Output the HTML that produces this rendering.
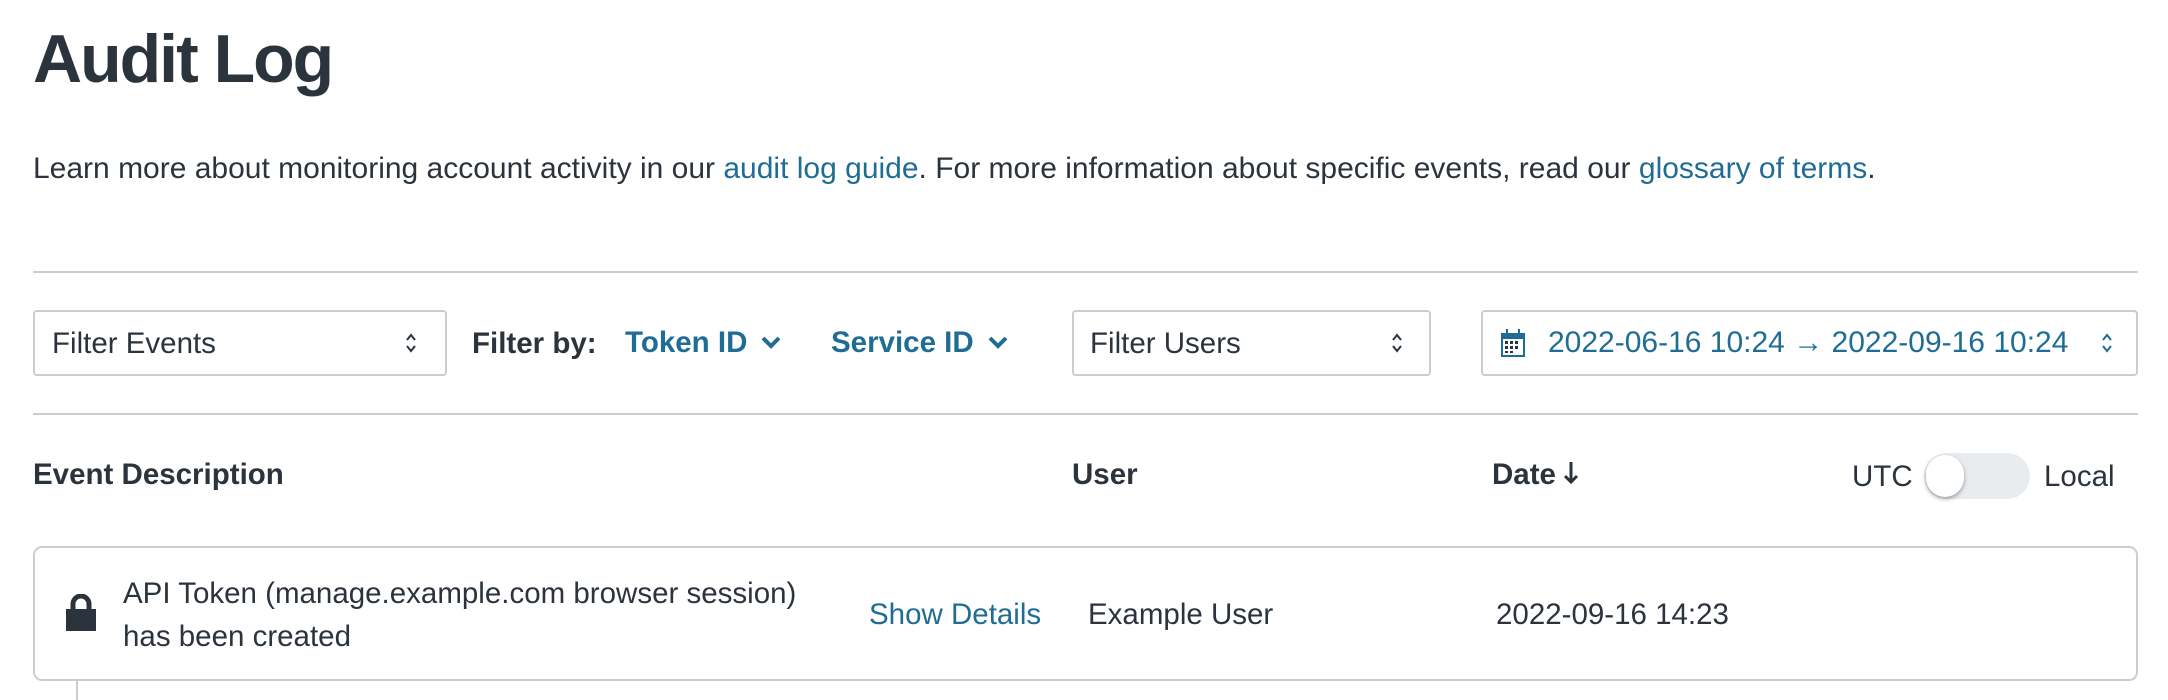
<!DOCTYPE html>
<html><head><meta charset="utf-8"><style>
*{margin:0;padding:0;box-sizing:border-box}
body{width:2168px;height:700px;overflow:hidden;background:#fff;font-family:"Liberation Sans",sans-serif;color:#2b333d;position:relative}
.a{position:absolute;white-space:nowrap}
a{color:#1f6d94;text-decoration:none}
.link{color:#1f6d94}
.hr{position:absolute;left:33px;width:2105px;height:2px;background:#c9cdd4}
.box{position:absolute;border:2px solid #c9cdd4;border-radius:4px;height:66px;top:310px}
.b{font-weight:bold}
.t{font-size:29.5px}
.spin{position:absolute;width:12px;height:22px}
</style></head><body>
<div class="a b" style="left:33px;top:20px;font-size:68px;letter-spacing:-2px;color:#2b333d">Audit Log</div>
<div class="a" style="left:33px;top:152px;font-size:30px">Learn more about monitoring account activity in our <a>audit log guide</a>. For more information about specific events, read our <a>glossary of terms</a>.</div>
<div class="hr" style="top:271px"></div>

<div class="box" style="left:33px;width:414px"></div>
<div class="a t" style="left:52px;top:327px">Filter Events</div>
<svg class="spin" style="left:405px;top:332px" viewBox="0 0 12 22"><path d="M2 8 6 3 10 8M2 14 6 19 10 14" fill="none" stroke="#2b333d" stroke-width="2"/></svg>

<div class="a b t" style="left:472px;top:327px">Filter by:</div>
<div class="a b link t" style="left:625px;top:326px">Token ID</div>
<svg class="a" style="left:760px;top:334px" width="22" height="16" viewBox="0 0 22 16"><path d="M3 4 11 12 19 4" fill="none" stroke="#1f6d94" stroke-width="4"/></svg>
<div class="a b link t" style="left:831px;top:326px">Service ID</div>
<svg class="a" style="left:987px;top:334px" width="22" height="16" viewBox="0 0 22 16"><path d="M3 4 11 12 19 4" fill="none" stroke="#1f6d94" stroke-width="4"/></svg>

<div class="box" style="left:1072px;width:359px"></div>
<div class="a t" style="left:1090px;top:327px">Filter Users</div>
<svg class="spin" style="left:1391px;top:332px" viewBox="0 0 12 22"><path d="M2 8 6 3 10 8M2 14 6 19 10 14" fill="none" stroke="#2b333d" stroke-width="2"/></svg>

<div class="box" style="left:1481px;width:657px"></div>
<svg class="a" style="left:1500px;top:328px" width="26" height="30" viewBox="0 0 26 30"><rect x="1" y="5" width="24" height="24" fill="#1f6d94"/><rect x="3" y="11" width="20" height="16" fill="#fff"/><g fill="#2b333d"><rect x="5" y="13" width="3" height="3"/><rect x="10" y="13" width="3" height="3"/><rect x="15" y="13" width="3" height="3"/><rect x="5" y="18" width="3" height="3"/><rect x="10" y="18" width="3" height="3"/><rect x="15" y="18" width="3" height="3"/><rect x="5" y="23" width="3" height="2"/><rect x="10" y="23" width="3" height="2"/></g><rect x="6" y="1" width="2" height="7" fill="#1f6d94"/><rect x="18" y="1" width="2" height="7" fill="#1f6d94"/></svg>
<div class="a link" style="left:1548px;top:326px;font-size:30px">2022-06-16 10:24 → 2022-09-16 10:24</div>
<svg class="spin" style="left:2101px;top:332px" viewBox="0 0 12 22"><path d="M2 8 6 3 10 8M2 14 6 19 10 14" fill="none" stroke="#1f6d94" stroke-width="2"/></svg>

<div class="hr" style="top:413px"></div>

<div class="a b t" style="left:33px;top:458px">Event Description</div>
<div class="a b t" style="left:1072px;top:458px">User</div>
<div class="a b t" style="left:1492px;top:458px">Date</div>
<svg class="a" style="left:1562px;top:460px" width="18" height="26" viewBox="0 0 18 26"><path d="M9 2V22M3 16 9 22 15 16" fill="none" stroke="#2b333d" stroke-width="3"/></svg>
<div class="a t" style="left:1852px;top:460px">UTC</div>
<div class="a" style="left:1924px;top:453px;width:106px;height:46px;border-radius:23px;background:#e9ecef"></div>
<div class="a" style="left:1926px;top:455px;width:38px;height:42px;border-radius:21px;background:#fff;box-shadow:0 2px 4px rgba(0,0,0,.35)"></div>
<div class="a t" style="left:2044px;top:460px">Local</div>

<div class="a" style="left:33px;top:546px;width:2105px;height:135px;border:2px solid #c9cdd4;border-radius:9px"></div>
<svg class="a" style="left:65px;top:594px" width="32" height="37" viewBox="0 0 32 37"><path d="M8 16V10a8 8 0 0 1 16 0v6" fill="none" stroke="#2b333d" stroke-width="5"/><rect x="1" y="15" width="30" height="22" fill="#2b333d"/></svg>
<div class="a t" style="left:123px;top:577px">API Token (manage.example.com browser session)</div>
<div class="a t" style="left:123px;top:620px">has been created</div>
<div class="a link t" style="left:869px;top:598px">Show Details</div>
<div class="a t" style="left:1088px;top:598px">Example User</div>
<div class="a t" style="left:1496px;top:598px">2022-09-16 14:23</div>
<div class="a" style="left:76px;top:681px;width:2px;height:19px;background:#c9cdd4"></div>
</body></html>
